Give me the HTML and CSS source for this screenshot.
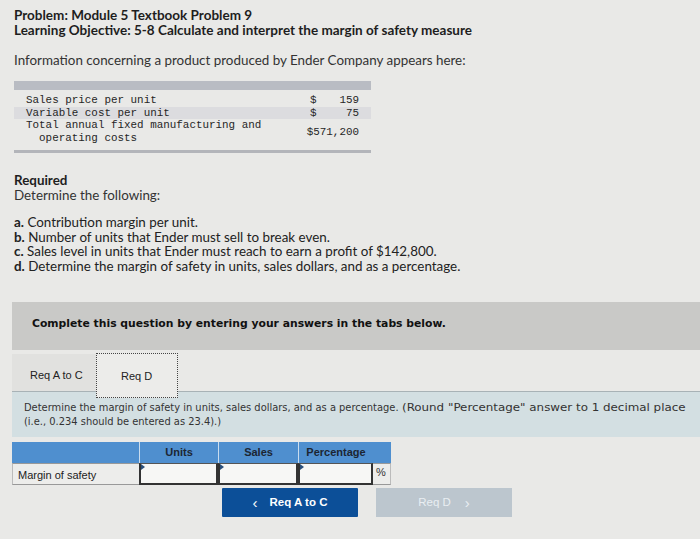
FILE: index.html
```html
<!DOCTYPE html>
<html>
<head>
<meta charset="utf-8">
<link rel="stylesheet" href="styles.css">
</head>
<body>
<div class="page">
  <div class="head">
    <div class="title">Problem: Module 5 Textbook Problem 9</div>
    <div class="title t2">Learning Objective: 5-8 Calculate and interpret the margin of safety measure</div>
  </div>
  <p class="intro">Information concerning a product produced by Ender Company appears here:</p>
  <div class="data">
    <div class="data-top"></div>
    <div class="data-row first"><span class="lbl">Sales price per unit</span><span class="cur">$</span><span class="val">159</span></div>
    <div class="data-row shade"><span class="lbl">Variable cost per unit</span><span class="cur">$</span><span class="val">75</span></div>
    <div class="data-row tall"><span class="lbl">Total annual fixed manufacturing and<br>&nbsp;&nbsp;operating costs</span><span class="val wide">$571,200</span></div>
    <div class="data-bottom"></div>
  </div>
  <div class="req">
    <div class="req-title">Required</div>
    <div>Determine the following:</div>
  </div>
  <ol class="list">
    <li><b>a.</b> Contribution margin per unit.</li>
    <li><b>b.</b> Number of units that Ender must sell to break even.</li>
    <li><b>c.</b> Sales level in units that Ender must reach to earn a profit of $142,800.</li>
    <li><b>d.</b> Determine the margin of safety in units, sales dollars, and as a percentage.</li>
  </ol>
  <div class="panel">
    <div class="banner">Complete this question by entering your answers in the tabs below.</div>
    <div class="tabs">
      <div class="tab">Req A to C</div>
      <div class="tab active">Req D</div>
    </div>
    <div class="instr"><span class="line1">Determine the margin of safety in units, sales dollars, and as a percentage. <span class="wide-part">(Round "Percentage" answer to 1 decimal place</span></span><br>(i.e., 0.234 should be entered as 23.4).)</div>
    <div class="answer">
      <div class="grid">
        <div class="h blank"></div>
        <div class="h">Units</div>
        <div class="h">Sales</div>
        <div class="h">Percentage</div>
        <div class="h none"></div>
        <div class="c label">Margin of safety</div>
        <div class="c inp"><span class="mark"></span></div>
        <div class="c inp"><span class="mark"></span></div>
        <div class="c inp"><span class="mark"></span></div>
        <div class="c pct">%</div>
      </div>
    </div>
    <div class="nav">
      <div class="btn prev"><span class="chev">&lsaquo;</span>Req A to C</div>
      <div class="btn next">Req D<span class="chev">&rsaquo;</span></div>
    </div>
  </div>
</div>
</body>
</html>
```
FILE: styles.css
```css
* { box-sizing: border-box; }
html, body { margin: 0; padding: 0; }
body {
  background: #e9e9e7;
  width: 700px;
  height: 539px;
  overflow: hidden;
  font-family: Lato, "Open Sans", sans-serif;
  color: #1e1e1e;
}
.page { padding: 8px 0 0 14px; }
.head { font-weight: 700; font-size: 13.5px; line-height: 15px; }
.intro { margin: 15px 0 0 0; font-size: 13.4px; line-height: 15px; color: #333; }
.data { width: 357px; margin-top: 13px; }
.data-top { height: 9px; background: #b9bcc3; }
.data-row {
  display: flex;
  font-family: "Liberation Mono", monospace;
  font-size: 10.9px;
  line-height: 12.7px;
  padding-left: 12px;
  color: #262626;
}
.data-row.first { margin-top: 4px; }
.data-row.shade { background: #dcdcdf; }
.data-row .lbl { flex: 1; }
.data-row .cur { width: 16px; }
.data-row .val { width: 33px; text-align: right; margin-right: 12px; }
.data-row .val.wide { width: 60px; align-self: center; }
.data-bottom { height: 3px; background: #b3b5ba; margin-top: 5px; }
.req { margin-top: 20px; font-size: 13.4px; line-height: 15px; color: #333; }
.req-title { font-weight: 700; color: #1e1e1e; }
.list { list-style: none; margin: 12px 0 0 0; padding: 0; font-size: 13.4px; line-height: 14.7px; color: #222; }
.list b { font-weight: 700; }
.panel { margin: 28px 0 0 -2px; }
.banner {
  background: #c9c9c7;
  height: 48px;
  padding: 15px 0 0 20px;
  font-family: "DejaVu Sans", Verdana, sans-serif;
  font-weight: 700;
  font-size: 10.8px;
  color: #111;
}
.tabs {
  display: flex;
  height: 42px;
  border-bottom: 1px solid #a8b2b6;
}
.tab {
  width: 84px;
  display: flex;
  align-items: center;
  padding-left: 18px;
  padding-top: 6px;
  font-family: "Liberation Sans", Arial, sans-serif;
  font-size: 11px;
  color: #222;
  background: #e1e1df;
  margin-top: 4px;
}
.tab.active {
  width: 82px;
  background: #ececea;
  border: 1px dotted #444;
  padding-left: 24px;
  padding-top: 2px;
  margin-top: 3px;
  height: 45px;
  position: relative;
  z-index: 1;
}
.instr {
  background: #d3dfe2;
  padding: 9px 0 7px 12px;
  font-family: "DejaVu Sans Condensed", "DejaVu Sans", sans-serif;
  font-size: 11px;
  line-height: 14.5px;
  color: #333;
  width: 702px;
  white-space: nowrap;
  overflow: hidden;
}
.wide-part { display: inline-block; transform: scaleX(1.2); transform-origin: left center; }
.answer { padding-top: 5px; }
.grid {
  display: grid;
  grid-template-columns: 127px 79px 80px 75px 18px;
  grid-template-rows: 21px 22px;
}
.h {
  background: #4f8fcf;
  color: #1c2633;
  font-family: "Liberation Sans", Arial, sans-serif;
  font-weight: 700;
  font-size: 11px;
  display: flex;
  align-items: center;
  justify-content: center;
  border-left: 1px solid #c9dcee;
}
.h.blank { border-left: none; }
.h.none { border-left: none; }
.c { background: #ededeb; border-top: 1px solid #999; border-bottom: 1px solid #999; }
.c.label {
  font-family: "Liberation Sans", Arial, sans-serif;
  font-size: 11px;
  display: flex;
  align-items: flex-end;
  padding: 0 0 3px 5px;
  color: #222;
  border-left: 1px solid #bbb;
}
.c.inp { border: 2px solid #333; border-top: 1px solid #555; background: #f7f7f5; position: relative; }
.mark {
  position: absolute; left: 0; top: 0;
  width: 0; height: 0;
  border-left: 4px solid #2a4f7a;
  border-top: 3px solid transparent;
  border-bottom: 3px solid transparent;
}
.c.pct {
  font-family: "Liberation Sans", Arial, sans-serif;
  font-size: 11px;
  padding: 2px 0 0 3px;
  color: #333;
  border-right: 1px solid #bbb;
}
.nav { display: flex; margin: 3px 0 0 210px; gap: 18px; }
.btn {
  width: 136px;
  height: 29px;
  display: flex;
  align-items: center;
  justify-content: center;
  font-family: "Liberation Sans", Arial, sans-serif;
  font-weight: 700;
  font-size: 11.5px;
}
.btn.prev { background: #0c4f98; color: #fff; border-radius: 1px; }
.btn.prev .chev { margin-right: 12px; font-size: 15px; font-weight: 400; line-height: 1; }
.btn.next { background: #bcc6ce; color: #e9eef2; font-weight: 400; }
.btn.next .chev { margin-left: 14px; font-size: 15px; line-height: 1; }
```
